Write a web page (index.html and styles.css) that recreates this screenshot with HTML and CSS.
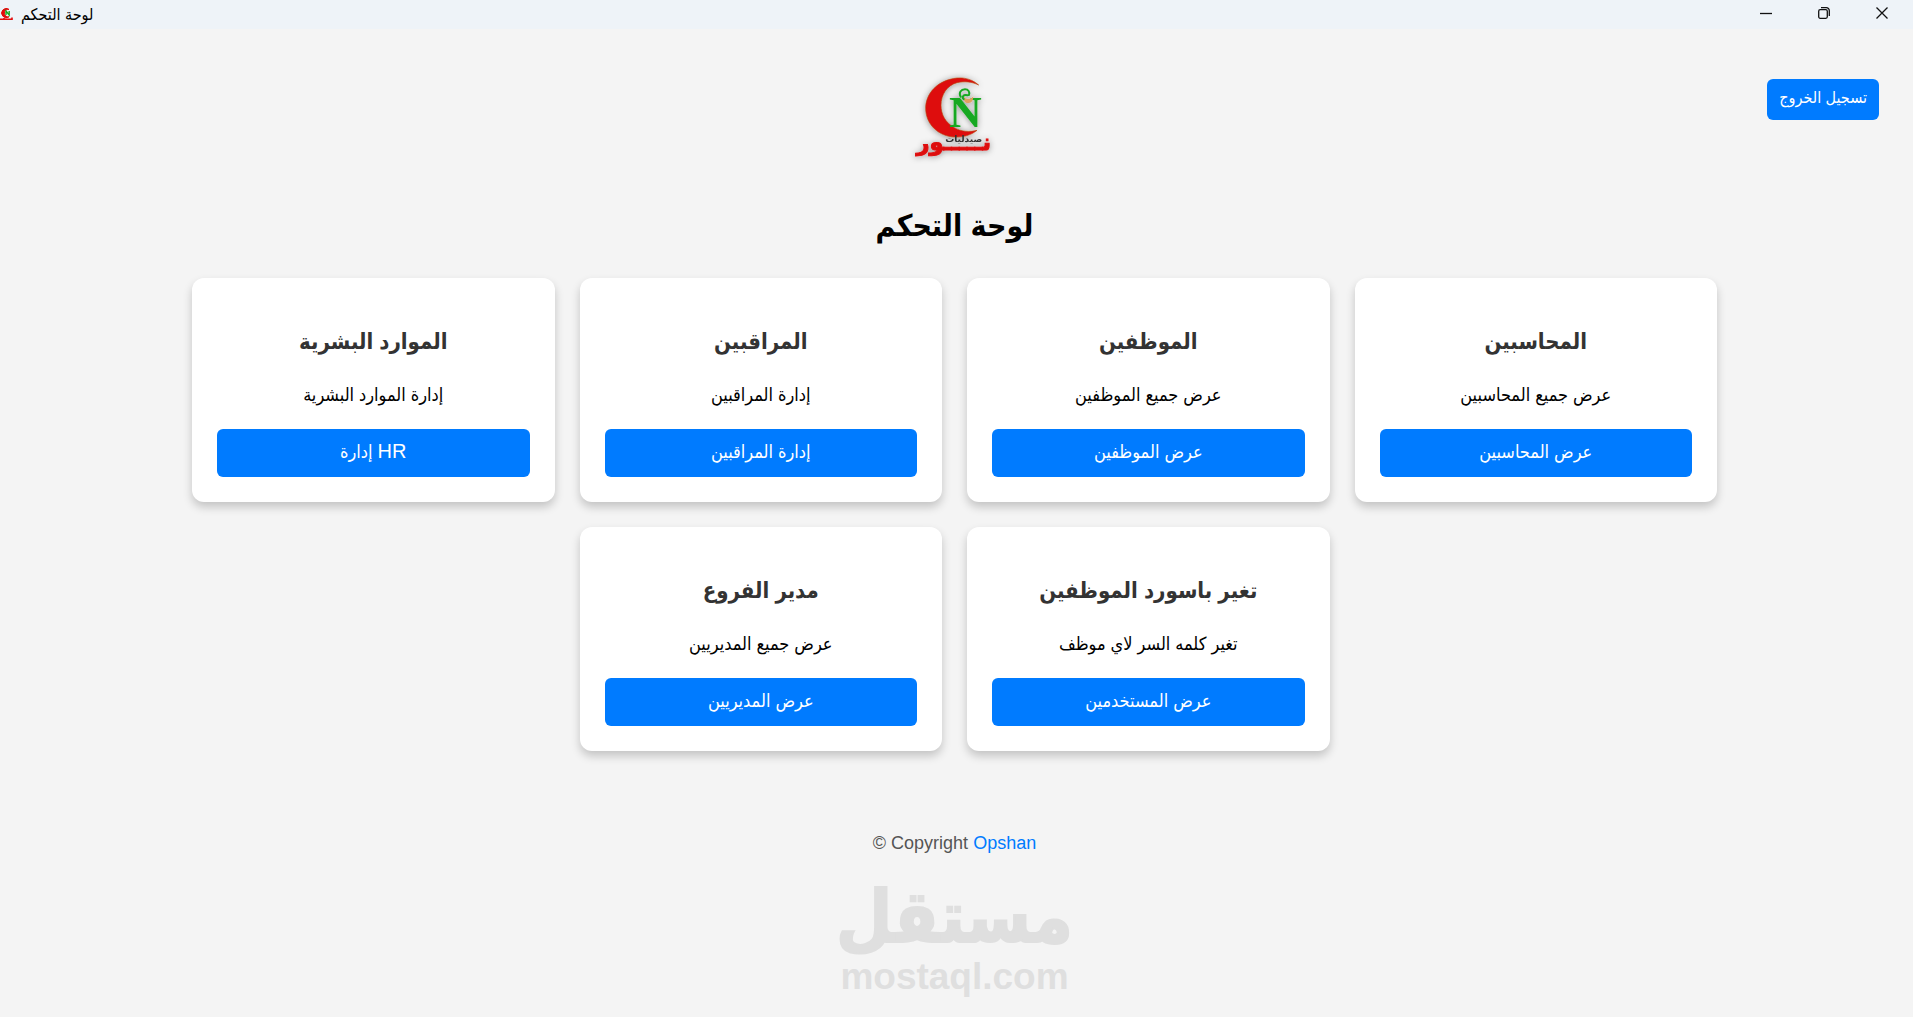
FILE: index.html
```html
<!DOCTYPE html>
<html lang="ar">

<head>
  <meta charset="UTF-8" />
  <meta name="viewport" content="width=device-width, initial-scale=1.0" />
  <title>لوحة التحكم</title>
  <link rel="stylesheet" href="styles.css">
</head>

<body>
  <div class="titlebar">
    <svg class="app-icon" viewBox="0 0 13 14" aria-hidden="true">
      <path d="M9 1.4A4.6 4.6 0 1 0 9 8.8 3.8 3.8 0 1 1 9 1.4Z" fill="#e30b0b" stroke="#e30b0b" />
      <path d="M6 7V3l3.2 4V3" fill="none" stroke="#19a821" stroke-width="1.4" />
      <path d="M0 11.2h4V10m0 1.2h8V9.500" fill="none" stroke="#e30b0b" stroke-width="1.6" />
    </svg>
    <span class="app-title" dir="rtl">لوحة التحكم</span>
    <div class="window-buttons">
      <button type="button" aria-label="تصغير">
        <svg viewBox="0 0 12 12"><path d="M0 6.500h12" /></svg>
      </button>
      <button type="button" aria-label="استعادة">
        <svg viewBox="0 0 12 12"><rect x=".7" y="2.700" width="8.600" height="8.600" rx="1.500" /><path d="M3 .7h5.300a3 3 0 0 1 3 3v5.300" /></svg>
      </button>
      <button type="button" aria-label="إغلاق">
        <svg viewBox="0 0 12 12"><path d="M.5.500l11 11M11.500.500l-11 11" /></svg>
      </button>
    </div>
  </div>

  <div class="page">
    <header class="header">
      <svg class="logo" viewBox="0 0 390 330" role="img" aria-label="صيدليات نور">
        <defs>
          <filter id="logoShadow" x="-20%" y="-20%" width="140%" height="140%">
            <feDropShadow dx="0" dy="2" stdDeviation="10" flood-color="#000" flood-opacity="0.4" />
          </filter>
        </defs>
        <g filter="url(#logoShadow)">
          <path d="M266 75C240 52 208 50 180 58 135 70 107 105 107 145c0 48 39 85 88 86 26 1 49-6 66-20-22 6-49 4-68-8-27-15-40-40-40-67 0-32 18-60 48-68 22-5 44-3 65 7Z" fill="#de0909" stroke="#b84a14" stroke-width="2" />
          <text class="logo-n" x="226" y="200" text-anchor="middle">N</text>
          <path d="M222 110c6 10 22 8 28-1-1 14-5 20-14 20-10 1-17-7-14-19Z" fill="#e0a060" />
          <path d="M212 110c-7-12 1-22 13-22 10 0 15 8 12 17M233 106c-14-3-18 5-12 11" fill="none" stroke="#19a821" stroke-width="6" stroke-linecap="round" />
          <text class="logo-name" x="191" y="269" text-anchor="middle">نـــــور</text>
          <text class="logo-sub" x="221" y="246" text-anchor="middle">صيدليات</text>
        </g>
      </svg>
      <button type="button" class="logout-btn" dir="rtl">تسجيل الخروج</button>
    </header>

    <h1 dir="rtl">لوحة التحكم</h1>

    <main class="cards" dir="rtl">
      <section class="card">
        <h2>المحاسبين</h2>
        <p>عرض جميع المحاسبين</p>
        <button type="button">عرض المحاسبين</button>
      </section>
      <section class="card">
        <h2>الموظفين</h2>
        <p>عرض جميع الموظفين</p>
        <button type="button">عرض الموظفين</button>
      </section>
      <section class="card">
        <h2>المراقبين</h2>
        <p>إدارة المراقبين</p>
        <button type="button">إدارة المراقبين</button>
      </section>
      <section class="card">
        <h2>الموارد البشرية</h2>
        <p>إدارة الموارد البشرية</p>
        <button type="button"><span class="latin">HR</span> إدارة</button>
      </section>
      <section class="card">
        <h2>تغير باسورد الموظفين</h2>
        <p>تغير كلمه السر لاي موظف</p>
        <button type="button">عرض المستخدمين</button>
      </section>
      <section class="card">
        <h2>مدير الفروع</h2>
        <p>عرض جميع المديريين</p>
        <button type="button">عرض المديريين</button>
      </section>
    </main>

    <footer class="footer">© Copyright <a href="#">Opshan</a></footer>

    <div class="watermark">
      <span class="watermark-ar" dir="rtl">مستقل</span>
      <span class="watermark-en">mostaql.com</span>
    </div>
  </div>
</body>

</html>
```
FILE: styles.css
```css
* {
  box-sizing: border-box;
}

body {
  margin: 0;
  min-height: 100vh;
  background: #f4f4f4;
  color: #000;
  font-family: "Liberation Sans", "DejaVu Sans Condensed", "DejaVu Sans", sans-serif;
}

button {
  font-family: inherit;
  border: none;
  cursor: pointer;
}

/* window bar */
.titlebar {
  display: flex;
  align-items: center;
  height: 29px;
  background: #eef3f8;
}

.app-icon {
  width: 13px;
  height: 14px;
}

.app-title {
  margin-left: 8px;
  font-size: 16px;
  line-height: 20px;
}

.window-buttons {
  display: flex;
  margin-left: auto;
  padding-right: 2px;
}

.window-buttons button {
  width: 58px;
  height: 29px;
  padding: 0;
  background: transparent;
}

.window-buttons svg {
  width: 12px;
  height: 12px;
  fill: none;
  stroke: #111;
  stroke-width: 1.3;
}

.page {
  padding-right: 4px;
  text-align: center;
}

.header {
  display: grid;
  grid-template-columns: 1fr auto 1fr;
  align-items: start;
  padding: 31px 30px 0;
}

.logo {
  grid-column: 2;
  width: 130px;
  height: 110px;
}

.logo-n {
  font: bold 136px "Liberation Serif", serif;
  fill: #19a821;
}

.logo-name {
  font: bold 68px "DejaVu Sans", sans-serif;
  fill: #de0909;
  stroke: #de0909;
  stroke-width: 3px;
}

.logo-sub {
  font: bold 27px "DejaVu Sans", sans-serif;
  fill: #333;
}

.logout-btn {
  justify-self: end;
  margin-top: 19px;
  padding: 0 12px 4px;
  height: 41px;
  font-size: 16px;
  color: #fff;
  background: #007bff;
  border-radius: 6px;
}

h1 {
  margin: 33px 0 29px;
  font-size: 30px;
  line-height: 46px;
}

.cards {
  display: flex;
  flex-wrap: wrap;
  justify-content: center;
  gap: 25px;
  width: 80%;
  max-width: 1525px;
  margin: 0 auto;
}

.card {
  flex: 0 0 calc((100% - 75px) / 4);
  padding: 25px;
  background: #fff;
  border-radius: 12px;
  box-shadow: 0 5px 10px rgba(0, 0, 0, 0.2);
}

.card h2 {
  margin: 25px 0 28px;
  font-size: 22px;
  line-height: 28px;
  color: #333;
}

.card p {
  margin: 0 0 22px;
  font-size: 18px;
  line-height: 23px;
}

.card button {
  display: block;
  width: 100%;
  height: 48px;
  padding: 0 0 3px;
  font-size: 18px;
  color: #fff;
  background: #007bff;
  border-radius: 6px;
}

.card .latin {
  font-size: 20px;
}

.footer {
  margin-top: 81px;
  font-size: 18px;
  line-height: 23px;
  color: #555;
}

.footer a {
  color: #007bff;
  text-decoration: none;
}

.watermark {
  display: flex;
  flex-direction: column;
  align-items: center;
  margin-top: 22px;
  font-weight: bold;
  color: #dfdfdf;
}

.watermark-ar {
  font-size: 72px;
  line-height: 80px;
  -webkit-text-stroke: 2px #dfdfdf;
}

.watermark-en {
  font-size: 37px;
  line-height: 40px;
}
```
